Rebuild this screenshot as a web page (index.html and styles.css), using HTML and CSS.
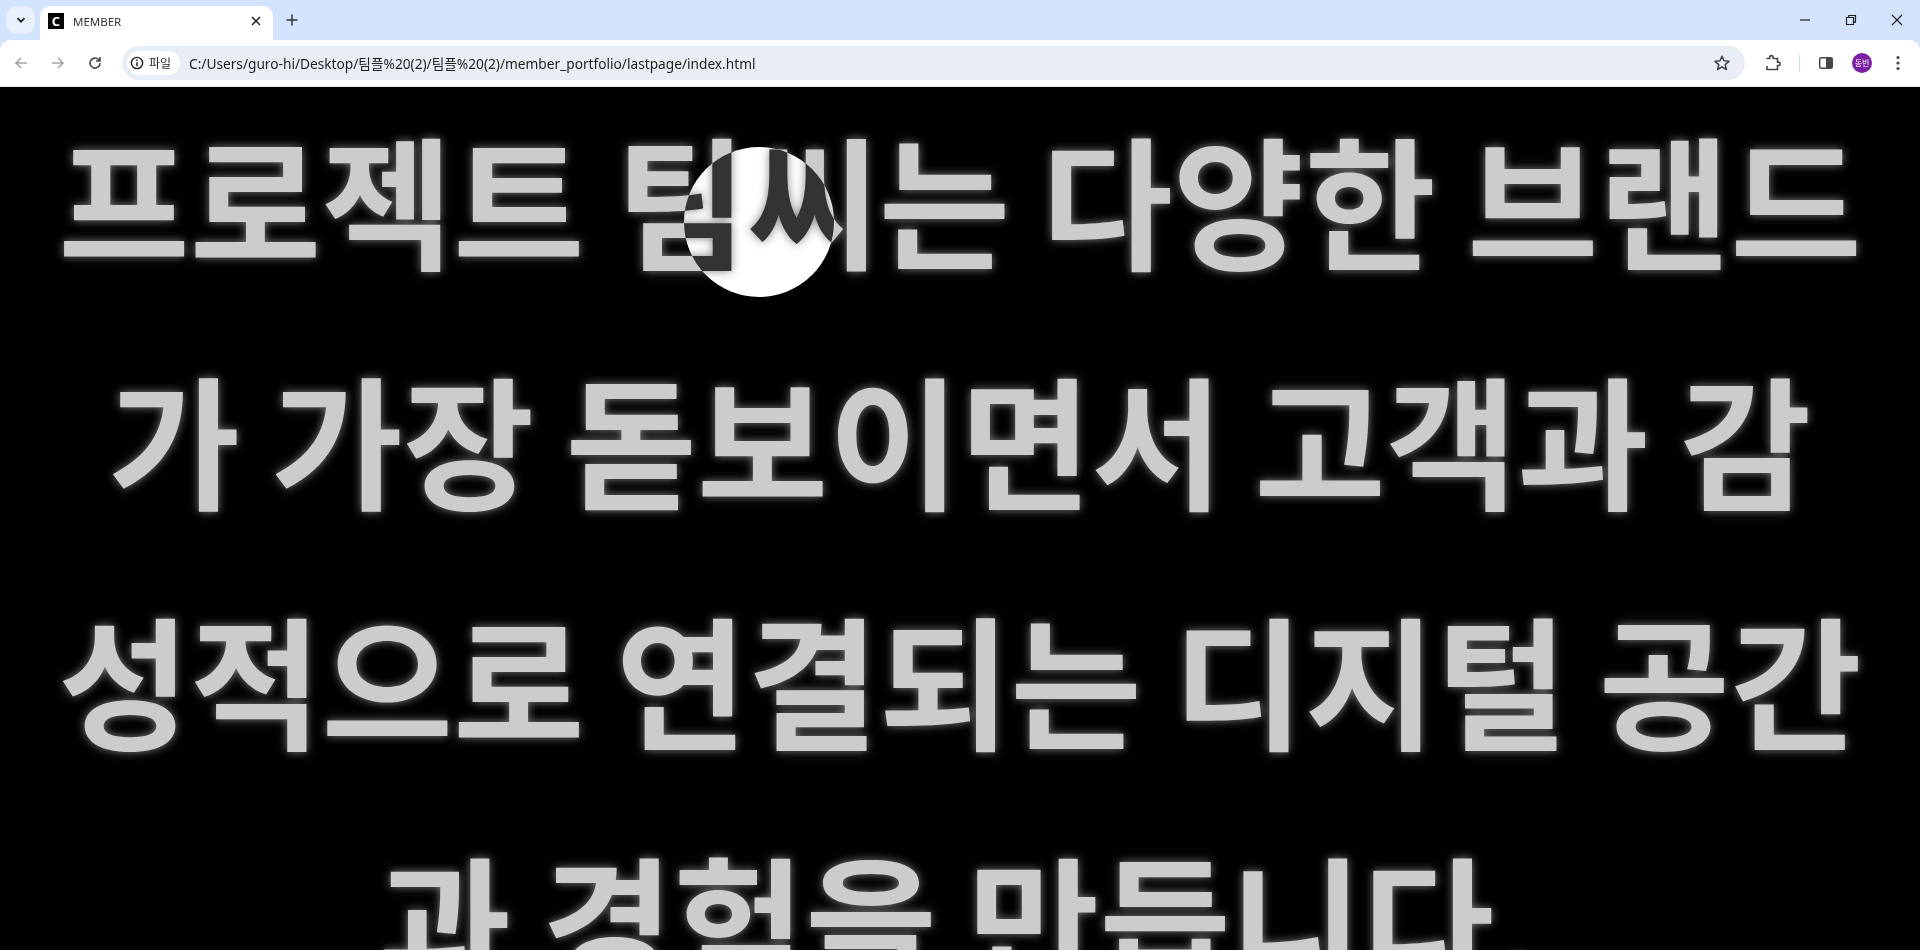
FILE: index.html
```html
<!DOCTYPE html>
<html lang="ko">
<head>
    <meta charset="UTF-8">
    <title>MEMBER</title>
    <link rel="stylesheet" href="styles.css">
</head>
<body>
    <header class="browser">
        <div class="tabstrip">
            <button class="tab-search">
                <svg width="12" height="12" viewBox="0 0 12 12"><path d="M2.5 4.2 6 7.7l3.5-3.5" fill="none" stroke="#1f1f1f" stroke-width="1.8"/></svg>
            </button>
            <div class="tab">
                <span class="favicon">C</span>
                <span class="tab-title">MEMBER</span>
                <svg class="tab-close" width="12" height="12" viewBox="0 0 12 12"><path d="M2 2l8 8M10 2l-8 8" stroke="#1f1f1f" stroke-width="1.5"/></svg>
            </div>
            <svg class="new-tab" width="14" height="14" viewBox="0 0 14 14"><path d="M7 1.5v11M1.5 7h11" stroke="#333" stroke-width="1.5"/></svg>
            <div class="window-btns">
                <svg width="14" height="14" viewBox="0 0 14 14"><path d="M2 7h10" stroke="#1f1f1f" stroke-width="1.2"/></svg>
                <svg width="14" height="14" viewBox="0 0 14 14"><path d="M2.5 4.5h7v7h-7zM4.8 4.5V2.5h6.7v6.7H9.5" fill="none" stroke="#1f1f1f" stroke-width="1.2"/></svg>
                <svg width="14" height="14" viewBox="0 0 14 14"><path d="M2 2l10 10M12 2 2 12" stroke="#1f1f1f" stroke-width="1.2"/></svg>
            </div>
        </div>
        <div class="toolbar">
            <svg class="nav-icon" width="16" height="16" viewBox="0 0 16 16"><path d="M14 8H3M8 3 3 8l5 5" fill="none" stroke="#a3a5a8" stroke-width="1.6"/></svg>
            <svg class="nav-icon" width="16" height="16" viewBox="0 0 16 16"><path d="M2 8h11M8 3l5 5-5 5" fill="none" stroke="#a3a5a8" stroke-width="1.6"/></svg>
            <svg class="nav-icon" width="16" height="16" viewBox="0 0 16 16"><path d="M13 8a5 5 0 1 1-1.5-3.5L13 6M13 2v4H9" fill="none" stroke="#444746" stroke-width="1.6"/></svg>
            <div class="omnibox">
                <div class="chip">
                    <svg width="14" height="14" viewBox="0 0 14 14"><circle cx="7" cy="7" r="5.6" fill="none" stroke="#1f1f1f" stroke-width="1.4"/><path d="M7 6.2v4M7 3.6v1.5" stroke="#1f1f1f" stroke-width="1.5"/></svg>
                    <span>파일</span>
                </div>
                <span class="url">C:/Users/guro-hi/Desktop/팀플%20(2)/팀플%20(2)/member_portfolio/lastpage/index.html</span>
                <svg class="star" width="18" height="18" viewBox="0 0 18 18"><path d="M9 2.2l2 4.6 5 .5-3.8 3.3 1.2 4.9L9 12.9l-4.4 2.6 1.2-4.9L2 7.3l5-.5z" fill="none" stroke="#444746" stroke-width="1.6" stroke-linejoin="round"/></svg>
            </div>
            <div class="toolbar-right">
                <svg class="extensions" width="18" height="18" viewBox="0 0 18 18"><path d="M2.5 5h3.2V3.8a1.7 1.7 0 0 1 3.4 0V5h4.4v3.6h1a1.7 1.7 0 0 1 0 3.4h-1v4H3v-3.4" fill="none" stroke="#444746" stroke-width="1.6" transform="translate(0 -.5)"/></svg>
                <span class="divider"></span>
                <svg class="side-panel" width="16" height="16" viewBox="0 0 16 16"><rect x="1.7" y="2.7" width="12.6" height="10.6" rx="1.5" fill="none" stroke="#444746" stroke-width="1.5"/><rect x="8" y="3" width="6" height="10" fill="#444746"/></svg>
                <span class="avatar">동빈</span>
                <svg class="menu" width="4" height="16" viewBox="0 0 4 16"><circle cx="2" cy="2.5" r="1.6" fill="#444746"/><circle cx="2" cy="8" r="1.6" fill="#444746"/><circle cx="2" cy="13.5" r="1.6" fill="#444746"/></svg>
            </div>
        </div>
    </header>

    <main class="page">
        <h1 class="headline">프로젝트 팀씨는 다양한 브랜드가 가장 돋보이면서 고객과 감성적으로 연결되는 디지털 공간과 경험을 만듭니다.</h1>
        <div class="cursor"></div>
    </main>
</body>
</html>
```

FILE: styles.css
```css
* {
    box-sizing: border-box;
}

html, body {
    height: 100%;
}

body {
    margin: 0;
    display: flex;
    flex-direction: column;
    overflow: hidden;
    background-color: #000;
    font-family: "Noto Sans", "Noto Sans CJK KR", sans-serif;
}

/* browser chrome */
.browser {
    flex: none;
    height: 87px;
    background-color: #d3e3fd;
}

.tabstrip {
    height: 40px;
    display: flex;
    align-items: flex-start;
    padding: 6px 0 0 6px;
}

.tab-search {
    width: 29px;
    height: 28px;
    padding: 0;
    border: 0;
    border-radius: 10px;
    background-color: #e8f0fe;
    display: flex;
    align-items: center;
    justify-content: center;
}

.tab {
    width: 233px;
    height: 34px;
    margin-left: 5px;
    padding: 0 11px 4px 8px;
    display: flex;
    align-items: center;
    background-color: #fff;
    border-radius: 10px 10px 0 0;
}

.favicon {
    width: 16px;
    height: 16px;
    background-color: #000;
    color: #fff;
    font-size: 13px;
    font-weight: bold;
    line-height: 16px;
    text-align: center;
}

.tab-title {
    flex: 1;
    margin-left: 9px;
    font-size: 11.5px;
    color: #333;
}

.new-tab {
    margin: 7px 0 0 12px;
}

.window-btns {
    margin-left: auto;
    display: flex;
    gap: 32px;
    padding: 7px 16px 0 0;
}

.toolbar {
    height: 47px;
    display: flex;
    align-items: center;
    padding: 0 0 1px 13px;
    background-color: #fff;
    border-radius: 10px 10px 0 0;
    border-bottom: 1px solid #e6e6e6;
}

.nav-icon {
    margin-right: 21px;
}

.omnibox {
    width: 1623px;
    height: 34px;
    margin-left: -2px;
    padding: 0 14px 0 5px;
    display: flex;
    align-items: center;
    background-color: #e9eef6;
    border-radius: 17px;
}

.chip {
    width: 53px;
    height: 24px;
    display: flex;
    align-items: center;
    gap: 5px;
    padding-left: 3px;
    background-color: #fff;
    border-radius: 12px;
    font-size: 12px;
    color: #1f1f1f;
}

.url {
    flex: 1;
    margin-left: 9px;
    font-size: 13.7px;
    color: #1f1f1f;
}

.toolbar-right {
    display: flex;
    align-items: center;
}

.extensions {
    margin-left: 19px;
}

.divider {
    width: 1px;
    height: 16px;
    margin-left: 17px;
    background-color: #c7d7f5;
}

.side-panel {
    margin-left: 18px;
}

.avatar {
    width: 20px;
    height: 20px;
    margin-left: 18px;
    border-radius: 50%;
    background-color: #7b1fa2;
    color: #fff;
    font-size: 8px;
    line-height: 20px;
    text-align: center;
}

.menu {
    margin-left: 24px;
}

/* page */
.page {
    flex: 1;
    position: relative;
    overflow: hidden;
    background-color: #000;
}

.headline {
    margin: -10px 0 0;
    padding: 0 50px;
    font-family: "Noto Sans CJK KR", sans-serif;
    font-size: 143px;
    font-weight: 700;
    line-height: 240px;
    word-spacing: -9px;
    text-align: center;
    word-break: break-all;
    color: #ccc;
    text-shadow: 0 0 10px rgba(255, 255, 255, 0.5);
}

.cursor {
    position: absolute;
    left: 684px;
    top: 60px;
    width: 150px;
    height: 150px;
    border-radius: 50%;
    background-color: #fff;
    mix-blend-mode: difference;
}
```
